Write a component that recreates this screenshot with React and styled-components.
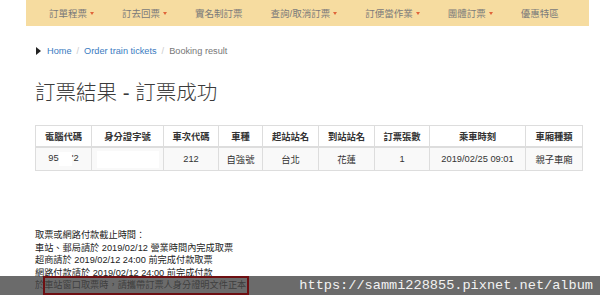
import React from "react";
import styled, { createGlobalStyle } from "styled-components";

const GlobalStyle = createGlobalStyle`
  html, body {
    margin: 0;
    padding: 0;
    background: #fff;
  }
  body {
    width: 600px;
    height: 295px;
    overflow: hidden;
    font-family: "Liberation Sans", "Noto Sans CJK TC", sans-serif;
    color: #333;
  }
`;

const Page = styled.div`
  position: relative;
  width: 600px;
  height: 295px;
  overflow: hidden;
`;

const Container = styled.div`
  width: 563px;
  margin-left: 26px;
`;

const NavBar = styled.ul`
  display: flex;
  align-items: center;
  height: 26px;
  margin: 0;
  padding: 0 0 0 23px;
  list-style: none;
  background-color: #f6dca0;
`;

const NavItem = styled.li`
  display: flex;
  align-items: center;
  font-size: 9.5px;
  color: #7a7a7a;
  margin-right: 28px;
  white-space: nowrap;
  &:last-child {
    margin-right: 0;
  }
`;

const Caret = styled.span`
  width: 0;
  height: 0;
  margin-left: 3px;
  border-left: 2.5px solid transparent;
  border-right: 2.5px solid transparent;
  border-top: 3px solid #e0643a;
`;

const Content = styled.div`
  padding: 0 9px;
`;

const Breadcrumb = styled.div`
  display: flex;
  align-items: center;
  margin-top: 18px;
  height: 14px;
  font-size: 9.2px;
`;

const Arrow = styled.span`
  width: 0;
  height: 0;
  margin: 0 6px 0 1px;
  border-top: 4px solid transparent;
  border-bottom: 4px solid transparent;
  border-left: 5px solid #222;
`;

const Crumb = styled.span`
  color: ${(p) => (p.active ? "#777" : "#3a7bbf")};
`;

const Sep = styled.span`
  color: #ccc;
  padding: 0 5px;
`;

const Title = styled.h1`
  margin: 21px 0 0 0;
  font-size: 20.5px;
  font-weight: 300;
  line-height: 28px;
  color: #3a3a3a;
`;

const Table = styled.table`
  margin-top: 18px;
  border-collapse: collapse;
  table-layout: fixed;
  width: 547px;
  font-size: 9.3px;
`;

const Th = styled.th`
  height: 20px;
  border: 1px solid #ddd;
  border-bottom: 2px solid #ddd;
  font-weight: 700;
  color: #333;
  text-align: center;
  padding: 0;
`;

const Td = styled.td`
  height: 22px;
  border: 1px solid #ddd;
  background: #f9f9f9;
  color: #333;
  text-align: center;
  padding: 0;
`;

const Redact = styled.span`
  display: inline-block;
  vertical-align: middle;
  background: #fff;
  width: ${(p) => p.w}px;
  height: ${(p) => p.h}px;
`;

const Notes = styled.div`
  margin-top: 58px;
  font-size: 9.2px;
  line-height: 12.5px;
  color: #222;
`;

const Overlay = styled.div`
  position: absolute;
  left: 0;
  right: 0;
  bottom: 0;
  height: 19px;
  background: rgba(70, 70, 70, 0.8);
  display: flex;
  align-items: center;
  justify-content: flex-end;
  padding-right: 7px;
`;

const Url = styled.span`
  font-family: "Liberation Mono", monospace;
  font-size: 13.6px;
  color: #f2f2f2;
`;

const Mark = styled.div`
  position: absolute;
  left: 43px;
  top: 276px;
  width: 202px;
  height: 15px;
  border: 2px solid #6e0f12;
`;

const navItems = [
  { label: "訂單程票", caret: true },
  { label: "訂去回票", caret: true },
  { label: "實名制訂票", caret: false },
  { label: "查詢/取消訂票", caret: true },
  { label: "訂便當作業", caret: true },
  { label: "團體訂票", caret: true },
  { label: "優惠特區", caret: false },
];

const cols = [56, 72, 55, 44, 56, 56, 55, 96, 57];
const heads = ["電腦代碼", "身分證字號", "車次代碼", "車種", "起站站名", "到站站名", "訂票張數", "乘車時刻", "車廂種類"];

const App = () => {
  return (
    <Page>
      <GlobalStyle />
      <Container>
        <NavBar>
          {navItems.map((n) => (
            <NavItem key={n.label}>
              {n.label}
              {n.caret && <Caret />}
            </NavItem>
          ))}
        </NavBar>
        <Content>
          <Breadcrumb>
            <Arrow />
            <Crumb>Home</Crumb>
            <Sep>/</Sep>
            <Crumb>Order train tickets</Crumb>
            <Sep>/</Sep>
            <Crumb active>Booking result</Crumb>
          </Breadcrumb>
          <Title>訂票結果 - 訂票成功</Title>
          <Table>
            <colgroup>
              {cols.map((w, i) => (
                <col key={i} style={{ width: w }} />
              ))}
            </colgroup>
            <thead>
              <tr>
                {heads.map((h) => (
                  <Th key={h}>{h}</Th>
                ))}
              </tr>
            </thead>
            <tbody>
              <tr>
                <Td>
                  95<Redact w={13} h={14} />'2
                </Td>
                <Td>
                  <Redact w={62} h={17} />
                </Td>
                <Td>212</Td>
                <Td>自強號</Td>
                <Td>台北</Td>
                <Td>花蓮</Td>
                <Td>1</Td>
                <Td>2019/02/25 09:01</Td>
                <Td>親子車廂</Td>
              </tr>
            </tbody>
          </Table>
          <Notes>
            <div>取票或網路付款截止時間：</div>
            <div>車站、郵局請於 2019/02/12 營業時間內完成取票</div>
            <div>超商請於 2019/02/12 24:00 前完成付款取票</div>
            <div>網路付款請於 2019/02/12 24:00 前完成付款</div>
            <div>於車站窗口取票時，請攜帶訂票人身分證明文件正本</div>
          </Notes>
        </Content>
      </Container>
      <Overlay>
        <Url>https://sammi228855.pixnet.net/album</Url>
      </Overlay>
      <Mark />
    </Page>
  );
};

export default App;
